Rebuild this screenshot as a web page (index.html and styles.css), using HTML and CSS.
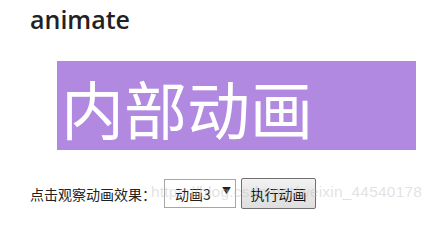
FILE: index.html
```html
<!DOCTYPE html>
<html lang="zh">
<head>
<meta charset="utf-8">
<link rel="stylesheet" href="styles.css">
</head>
<body>
<div class="page">
  <h1 class="title">animate</h1>
  <div class="stage">
    <div class="box">内部动画</div>
  </div>
  <div class="controls">
    <span class="label">点击观察动画效果：</span>
    <div class="select">
      <span class="select-value">动画3</span>
      <span class="select-arrow">▼</span>
    </div>
    <button class="btn">执行动画</button>
  </div>
  <div class="watermark">https://blog.csdn.net/weixin_44540178</div>
</div>
</body>
</html>
```
FILE: styles.css
```css
html, body {
  margin: 0;
  padding: 0;
  background: #fff;
}
.page {
  position: relative;
  width: 431px;
  height: 214px;
  padding: 0 0 0 30px;
  box-sizing: border-box;
  font-family: "Noto Sans", "Noto Sans CJK SC", sans-serif;
  color: #222;
}
.title {
  margin: 0;
  padding-top: 2px;
  font-family: "Open Sans", "Noto Sans", sans-serif;
  font-weight: 600;
  font-size: 25px;
  line-height: 34px;
  color: #222;
}
.stage {
  padding: 25px 0 0 27px;
}
.box {
  width: 359px;
  height: 89px;
  background: #b189e1;
  color: #fff;
  font-family: "Noto Sans CJK SC", sans-serif;
  font-size: 63px;
  line-height: 84px;
  padding: 4px 0 0 4px;
  box-sizing: border-box;
}
.controls {
  display: flex;
  align-items: center;
  margin-top: 28px;
  font-size: 14px;
}
.label {
  font-family: "Noto Sans CJK SC", sans-serif;
  font-size: 14px;
  color: #222;
  width: 134px;
}
.select {
  display: flex;
  align-items: center;
  justify-content: space-between;
  width: 72px;
  height: 29px;
  box-sizing: border-box;
  border: 1px solid #a6a6a6;
  background: #fff;
  padding: 0 4px 0 10px;
  font-family: "Noto Sans CJK SC", sans-serif;
  font-size: 14px;
}
.select-arrow {
  font-size: 9px;
  margin-top: -6px;
}
.btn {
  margin-left: 5px;
  width: 75px;
  height: 31px;
  box-sizing: border-box;
  border: 1px solid #707070;
  border-radius: 2px;
  background: linear-gradient(#f2f2f2, #dedede);
  font-family: "Noto Sans CJK SC", sans-serif;
  font-size: 14px;
  color: #111;
  padding: 0;
}
.watermark {
  position: absolute;
  left: 151px;
  top: 183px;
  font-family: "Liberation Sans", sans-serif;
  font-size: 15.5px;
  letter-spacing: 0.2px;
  color: rgba(190, 190, 190, 0.45);
  pointer-events: none;
}
```
